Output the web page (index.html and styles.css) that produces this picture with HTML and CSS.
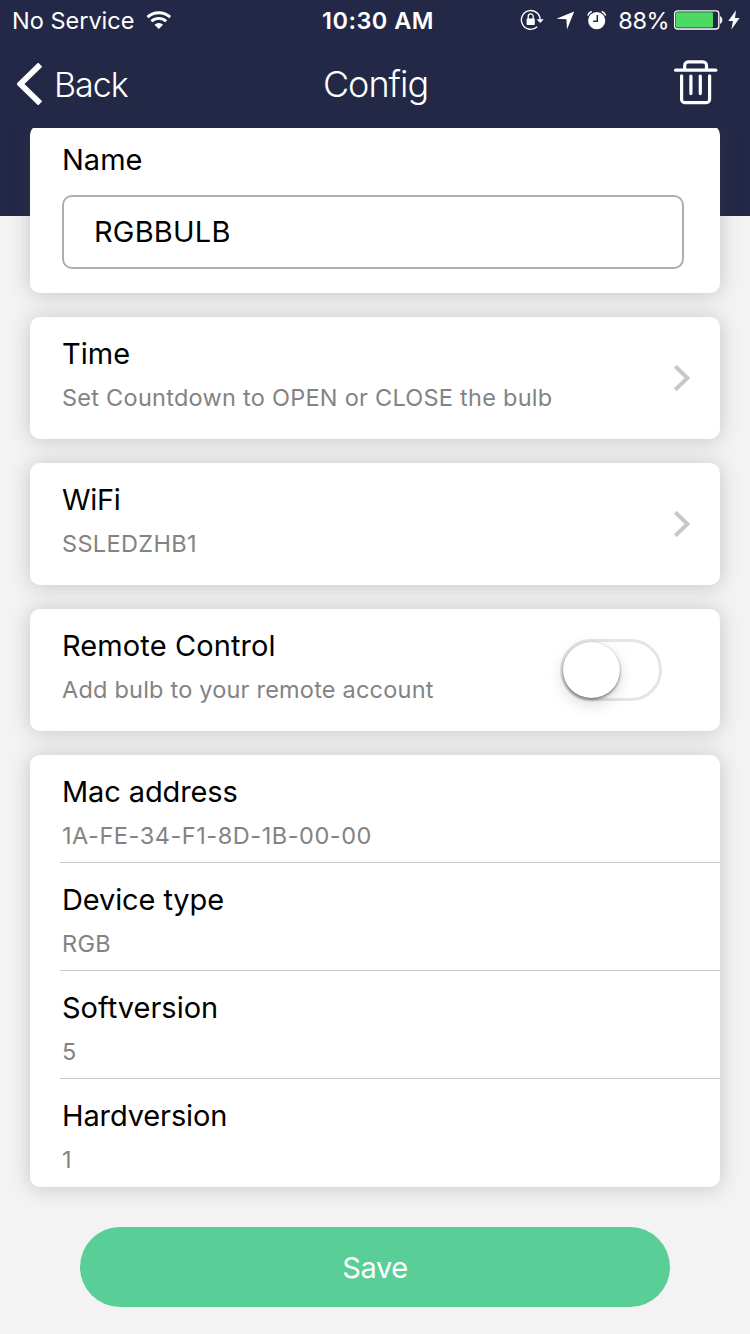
FILE: index.html
```html
<!DOCTYPE html>
<html lang="en">
<head>
<meta charset="utf-8">
<title>Config</title>
<link rel="stylesheet" href="styles.css">
</head>
<body>
<div class="screen">
  <header class="top">
    <div class="status">
      <div class="status-left">
        <span class="carrier">No Service</span>
        <svg class="wifi" width="26" height="20" viewBox="0 0 26 20">
          <g fill="none" stroke="#fff">
            <path d="M1.5 7.2a16.3 16.3 0 0 1 22.6 0" stroke-width="3"/>
            <path d="M5.4 11.3a10.8 10.8 0 0 1 14.8 0" stroke-width="2.8"/>
          </g>
          <path d="M12.8 19.1l-4.3-4.3a6.2 6.2 0 0 1 8.6 0z" fill="#fff"/>
        </svg>
      </div>
      <span class="clock">10:30 AM</span>
      <div class="status-right">
        <svg class="lock" width="24" height="22" viewBox="0 0 24 22">
          <path d="M17.2 17.8A9.4 9.4 0 1 1 20.2 10.6" fill="none" stroke="#fff" stroke-width="1.4"/>
          <path d="M16.6 10.2h7.2l-3.6 3.9z" fill="#fff"/>
          <rect x="6.6" y="9.6" width="8.2" height="6.4" rx=".8" fill="#fff"/>
          <path d="M8.2 10V7.4a2.5 2.5 0 0 1 5 0V10" fill="none" stroke="#fff" stroke-width="1.3"/>
        </svg>
        <svg class="arrow" width="19" height="19" viewBox="0 0 19 19">
          <path d="M18.2.6L11 18.4 10.4 8.3.4 7.8z" fill="#fff"/>
        </svg>
        <svg class="alarm" width="20" height="20" viewBox="0 0 20 20">
          <circle cx="9.7" cy="10.6" r="8.6" fill="#fff"/>
          <path d="M.8 5.4A6 6 0 0 1 4.8 1.6M18.6 5.4a6 6 0 0 0-4-3.8" fill="none" stroke="#fff" stroke-width="1.6"/>
          <path d="M10.3 5v6.2H6.2" fill="none" stroke="#242847" stroke-width="1.5"/>
        </svg>
        <span class="percent">88%</span>
        <svg class="battery" width="50" height="20" viewBox="0 0 50 20">
          <rect x=".6" y=".8" width="44.2" height="18.2" rx="2.8" fill="none" stroke="#fff" stroke-width="1.3"/>
          <rect x="2" y="2.2" width="37" height="15.4" rx="1" fill="#4cd964"/>
          <path d="M46.4 6.6a4.6 4.6 0 0 1 0 6.8z" fill="#fff" stroke="#fff"/>
        </svg>
        <svg class="bolt" width="12" height="20" viewBox="0 0 12 20">
          <path d="M8 .2L.3 11h4.6L3.4 19.6 11.6 8H7z" fill="#fff"/>
        </svg>
      </div>
    </div>
    <nav class="nav">
      <a class="back">
        <svg width="26" height="42" viewBox="0 0 26 42"><path d="M23.2 1.6L3.4 21l19.8 19.4" fill="none" stroke="#fff" stroke-width="5.8"/></svg>
        <span class="back-text">Back</span>
      </a>
      <h1 class="title">Config</h1>
      <svg class="trash" width="44" height="45" viewBox="0 0 44 45">
        <g fill="none" stroke="#fff" stroke-width="3.2" stroke-linecap="round">
          <path d="M1.6 10.2h40.2"/>
          <path d="M10.7 9V5.4a3.6 3.6 0 0 1 3.6-3.6h14.6a3.6 3.6 0 0 1 3.6 3.6V9"/>
          <path d="M7.6 15.8v23.6a3.2 3.2 0 0 0 3.2 3.2h21.6a3.2 3.2 0 0 0 3.2-3.2V15.8"/>
          <path d="M16.9 16v17.6M26.3 16v17.6"/>
        </g>
      </svg>
    </nav>
  </header>
  <main class="content">
    <section class="card name-card">
      <div class="label">Name</div>
      <div class="field"><span class="field-value">RGBBULB</span></div>
    </section>
    <section class="card row">
      <div><div class="label">Time</div><div class="sub countdown">Set Countdown to OPEN or CLOSE the bulb</div></div>
      <svg class="chevron" width="17" height="28" viewBox="0 0 17 28"><path d="M2.2 2.2L14.4 14 2.2 25.8" fill="none" stroke="#c7c7cc" stroke-width="4"/></svg>
    </section>
    <section class="card row">
      <div><div class="label wifi-label">WiFi</div><div class="sub">SSLEDZHB1</div></div>
      <svg class="chevron" width="17" height="28" viewBox="0 0 17 28"><path d="M2.2 2.2L14.4 14 2.2 25.8" fill="none" stroke="#c7c7cc" stroke-width="4"/></svg>
    </section>
    <section class="card row">
      <div><div class="label remote">Remote Control</div><div class="sub remote-sub">Add bulb to your remote account</div></div>
      <div class="switch"><div class="knob"></div></div>
    </section>
    <section class="card list">
      <div class="item"><div class="label tight">Mac address</div><div class="sub mac-sub">1A-FE-34-F1-8D-1B-00-00</div></div>
      <div class="item"><div class="label tight">Device type</div><div class="sub">RGB</div></div>
      <div class="item"><div class="label">Softversion</div><div class="sub">5</div></div>
      <div class="item"><div class="label tight">Hardversion</div><div class="sub">1</div></div>
    </section>
    <button class="save">Save</button>
  </main>
</div>
</body>
</html>
```
FILE: styles.css
```css
* { box-sizing: border-box; }
body { margin: 0; font-family: Inter, "Liberation Sans", sans-serif; }
.screen { width: 750px; height: 1334px; background: #f3f3f3; overflow: hidden; }
.top { height: 128px; background: #242847; color: #fff; }
.status { height: 40px; display: grid; grid-template-columns: 1fr auto 1fr; align-items: center; font-size: 23.5px; line-height: 38px; white-space: nowrap; }
.status span { padding-top: 2px; }
.status-left { display: flex; align-items: center; gap: 12px; padding-left: 12px; }
.carrier { letter-spacing: 0; }
.clock { font-weight: 600; letter-spacing: 0.5px; margin-left: 6px; }
.status-right { display: flex; align-items: center; justify-content: flex-end; padding-right: 10px; }
.arrow { margin-left: 12px; }
.alarm { margin-left: 12px; }
.percent { margin: 0 5px 0 11px; letter-spacing: -0.5px; }
.bolt { margin-left: 4px; }
.nav { height: 88px; padding: 0 32px 0 17px; display: grid; grid-template-columns: 1fr auto 1fr; align-items: center; }
.back { display: flex; align-items: center; gap: 11px; }
.back-text { font-size: 34px; font-weight: 350; line-height: 44px; letter-spacing: -1px; padding-top: 1px; }
.title { margin: 0; font-size: 36px; font-weight: 350; line-height: 44px; letter-spacing: -1px; padding-left: 16px; }
.trash { justify-self: end; margin-bottom: 4px; }
.content { height: 1206px; padding: 0 30px; overflow: hidden; display: flex; flex-direction: column; gap: 24px; background: linear-gradient(#242847 88px, #f3f3f3 88px); }
.card { flex: none; background: #fff; border-radius: 10px; box-shadow: 0 1px 20px rgba(77, 77, 77, 0.28); padding-left: 32px; }
.label { font-size: 29px; line-height: 36px; color: #000; white-space: nowrap; }
.tight { letter-spacing: -0.12px; }
.wifi-label { letter-spacing: -0.3px; }
.remote { letter-spacing: 0.1px; }
.sub { font-size: 23.5px; line-height: 30px; margin-top: 11px; color: #838383; letter-spacing: 0.35px; white-space: nowrap; }
.countdown { letter-spacing: 0.26px; }
.remote-sub { letter-spacing: 0.21px; }
.mac-sub { letter-spacing: 0.55px; }
.name-card { height: 168px; margin-top: -3px; padding-top: 17px; padding-right: 36px; }
.field { height: 74px; margin-top: 17px; border: 2px solid #aeaeae; border-radius: 10px; padding: 0 0 2px 30px; display: flex; align-items: center; font-size: 29px; letter-spacing: 0.2px; }
.row { height: 122px; padding-top: 19px; padding-right: 30px; display: flex; justify-content: space-between; }
.chevron { margin-top: 28px; }
.switch { width: 102px; height: 62px; margin: 11px 28px 0 0; border: 3px solid #e5e5e5; border-radius: 31px; }
.knob { width: 57px; height: 56px; border-radius: 28px; background: #fff; margin-left: -0.5px; box-shadow: 0 2px 3px rgba(0, 0, 0, 0.4), 0 6px 16px rgba(0, 0, 0, 0.15), 0 0 1px rgba(0, 0, 0, 0.3); }
.list { padding-left: 30px; }
.item { height: 108px; padding: 19px 0 0 2px; border-bottom: 1px solid #c8c7cc; }
.item:last-child { border-bottom: 0; }
.save { flex: none; width: 590px; height: 80px; margin: 16px auto 0; border: 0; border-radius: 40px; background: #5ace97; color: #fff; font-family: inherit; font-size: 29px; font-weight: 400; letter-spacing: -0.4px; }
```
